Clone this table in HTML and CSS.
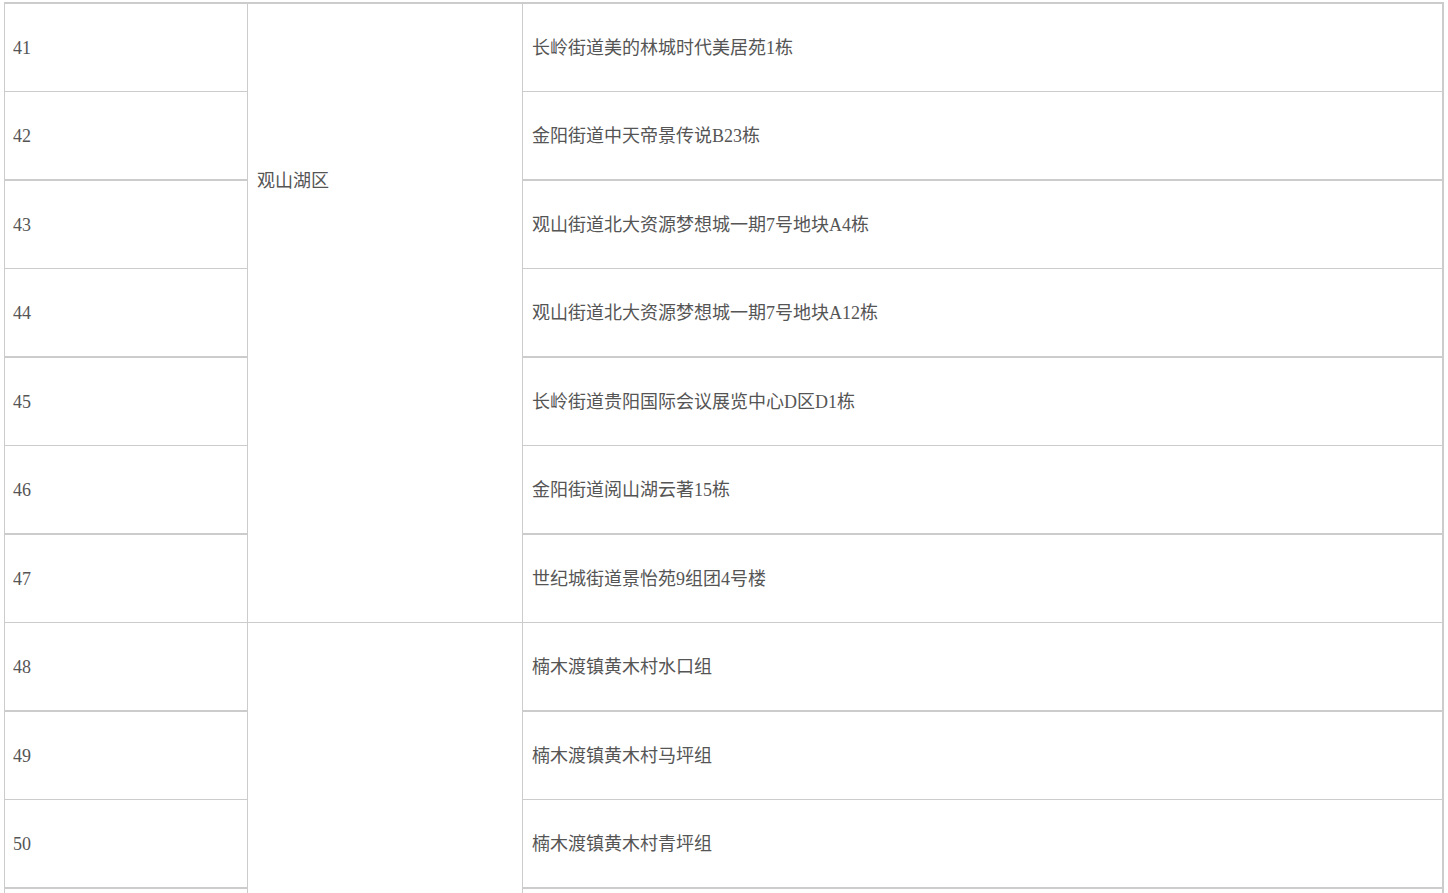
FILE: index.html
```html
<!DOCTYPE html>
<html lang="zh-CN">
<head>
<meta charset="utf-8">
<title>表格</title>
<link rel="stylesheet" href="styles.css">
</head>
<body>
<table class="list">
  <colgroup>
    <col class="c-no">
    <col class="c-area">
    <col class="c-addr">
  </colgroup>
  <tbody>
    <tr class="thick">
      <td>41</td>
      <td class="area area-top" rowspan="4">观山湖区</td>
      <td>长岭街道美的林城时代美居苑1栋</td>
    </tr>
    <tr>
      <td>42</td>
      <td>金阳街道中天帝景传说B23栋</td>
    </tr>
    <tr class="thick">
      <td>43</td>
      <td>观山街道北大资源梦想城一期7号地块A4栋</td>
    </tr>
    <tr>
      <td>44</td>
      <td>观山街道北大资源梦想城一期7号地块A12栋</td>
    </tr>
    <tr class="thick">
      <td>45</td>
      <td class="area area-bottom" rowspan="3"></td>
      <td>长岭街道贵阳国际会议展览中心D区D1栋</td>
    </tr>
    <tr>
      <td>46</td>
      <td>金阳街道阅山湖云著15栋</td>
    </tr>
    <tr class="thick">
      <td>47</td>
      <td>世纪城街道景怡苑9组团4号楼</td>
    </tr>
    <tr>
      <td>48</td>
      <td class="area" rowspan="4"></td>
      <td>楠木渡镇黄木村水口组</td>
    </tr>
    <tr class="thick">
      <td>49</td>
      <td>楠木渡镇黄木村马坪组</td>
    </tr>
    <tr>
      <td>50</td>
      <td>楠木渡镇黄木村青坪组</td>
    </tr>
    <tr class="thick">
      <td></td>
      <td></td>
    </tr>
  </tbody>
</table>
</body>
</html>
```

FILE: styles.css
```css
html, body {
  margin: 0;
  padding: 0;
  background: #fff;
  overflow: hidden;
}

body {
  font-family: "Liberation Serif", "Noto Sans CJK SC", serif;
  font-size: 18px;
  color: #555;
}

.list {
  margin: 2px 0 0 4px;
  width: 1438px;
  border-collapse: collapse;
  table-layout: fixed;
}

.c-no { width: 243px; }
.c-area { width: 275px; }
.c-addr { width: 920px; }

.list td {
  border: 1px solid #cccccc;
  padding: 0 8px 0 9px;
  height: 87px;
  vertical-align: middle;
  line-height: 20px;
  white-space: nowrap;
}

.list td:first-child {
  padding-left: 8px;
}

.list tr.thick td {
  border-top-width: 2px;
}

.list tr td:last-child {
  border-right-width: 2px;
}

.list td.area {
  border-right-width: 1px;
}

.list td.area-top {
  border-bottom: none;
}

.list td.area-bottom {
  border-top: none;
}
```
